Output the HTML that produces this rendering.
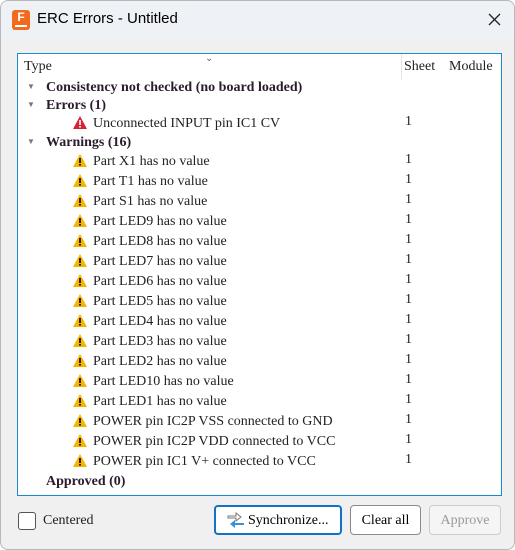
<!DOCTYPE html>
<html><head><style>
body{margin:0;width:515px;height:550px;background:#fff;font-family:"Liberation Serif",serif;overflow:hidden;position:relative}
.win{position:absolute;left:0;top:0;width:513px;height:548px;border:1px solid #b8b8b8;border-radius:8px;background:#f0f0f0;overflow:hidden}
.title{position:absolute;left:0;top:0;right:0;height:38px;background:#eef1f6}
.title .t{position:absolute;left:36px;top:9px;font:15px "Liberation Sans",sans-serif;color:#000}
.logo{position:absolute;left:11px;top:9px;width:18px;height:20px;background:#f26b1d;border-radius:3px;color:#fff;font:bold 12px "Liberation Sans",sans-serif;text-align:center;line-height:15px;overflow:hidden}
.logo:after{content:"";position:absolute;left:3px;right:3px;bottom:3px;height:2px;background:#fff}
.list{position:absolute;left:16px;top:52px;width:483px;height:441px;border:1px solid #1a8ad4;background:#fff}
.r{position:absolute;font-size:14px;white-space:nowrap;color:#222}
.b{font-weight:bold;color:#2b1b2e}
.tri{position:absolute;font-size:8px;color:#777}
.num{position:absolute;left:387px;font-size:14px;color:#222}
.sep{position:absolute;left:383px;top:0;width:1px;height:26px;background:#e5e5e5}
.btn{position:absolute;top:504px;height:30px;border:1px solid #8a8a8a;border-radius:4px;background:#fff;font-size:14px;text-align:center;line-height:30px;box-sizing:border-box}
</style></head><body>
<div class="win">
<div class="title"><div class="logo">F</div><div class="t">ERC Errors - Untitled</div>
<svg style="position:absolute;left:487px;top:12px" width="13" height="13"><path d="M1 1L12 12M12 1L1 12" stroke="#222" stroke-width="1.3"/></svg></div>
<div class="list">
<div class="r" style="left:6px;top:5px">Type</div>
<div style="position:absolute;left:187px;top:-1px;font-size:10px;color:#666">&#8964;</div>
<div class="sep"></div>
<div class="r" style="left:386px;top:5px">Sheet</div>
<div class="r" style="left:431px;top:5px">Module</div>
<div id="rows"></div>
</div>
<div style="position:absolute;left:17px;top:511px;width:16px;height:16px;border:1px solid #555;border-radius:3px;background:#fff"></div>
<div class="r" style="left:42px;top:512px">Centered</div>
<div class="btn" style="left:213px;width:128px;border:2px solid #0f74c8;line-height:27px;text-align:left;padding-left:32px">Synchronize...
<svg style="position:absolute;left:11px;top:5px" width="18" height="16"><path d="M1 4H9V1L14 5L9 9V6H1Z" fill="#fff" stroke="#777"/><path d="M17 11H8V8L3 12L8 16V13H17Z" fill="#3b8fd8"/></svg></div>
<div class="btn" style="left:349px;width:71px">Clear all</div>
<div class="btn" style="left:428px;width:72px;border-color:#ccc;background:#f5f5f5;color:#9a9a9a">Approve</div>
</div>
<script>
var h='';
function hdr(t,y,tri){h+=(tri?'<div class="tri" style="left:9px;top:'+(y+2)+'px">▼</div>':'')+'<div class="r b" style="left:28px;top:'+y+'px">'+t+'</div>';}
function item(t,y,err){h+='<svg style="position:absolute;left:54px;top:'+(y-1)+'px" width="16" height="15" viewBox="0 0 16 15"><path d="M8 1L15 14H1Z" fill="'+(err?'#d9213a':'#f5b400')+'"/><rect x="7.2" y="5" width="1.6" height="5" fill="'+(err?'#fff':'#000')+'"/><rect x="7.2" y="11" width="1.6" height="1.6" fill="'+(err?'#fff':'#000')+'"/></svg><div class="r" style="left:75px;top:'+y+'px">'+t+'</div><div class="num" style="top:'+(y-2)+'px">1</div>';}
hdr('Consistency not checked (no board loaded)',26,1);
hdr('Errors (1)',44,1);
item('Unconnected INPUT pin IC1 CV',62,1);
hdr('Warnings (16)',81,1);
var w=['Part X1 has no value','Part T1 has no value','Part S1 has no value','Part LED9 has no value','Part LED8 has no value','Part LED7 has no value','Part LED6 has no value','Part LED5 has no value','Part LED4 has no value','Part LED3 has no value','Part LED2 has no value','Part LED10 has no value','Part LED1 has no value','POWER pin IC2P VSS connected to GND','POWER pin IC2P VDD connected to VCC','POWER pin IC1 V+ connected to VCC'];
for(var i=0;i<w.length;i++)item(w[i],100+i*20,0);
hdr('Approved (0)',420,0);
document.getElementById('rows').innerHTML=h;
</script>
</body></html>
